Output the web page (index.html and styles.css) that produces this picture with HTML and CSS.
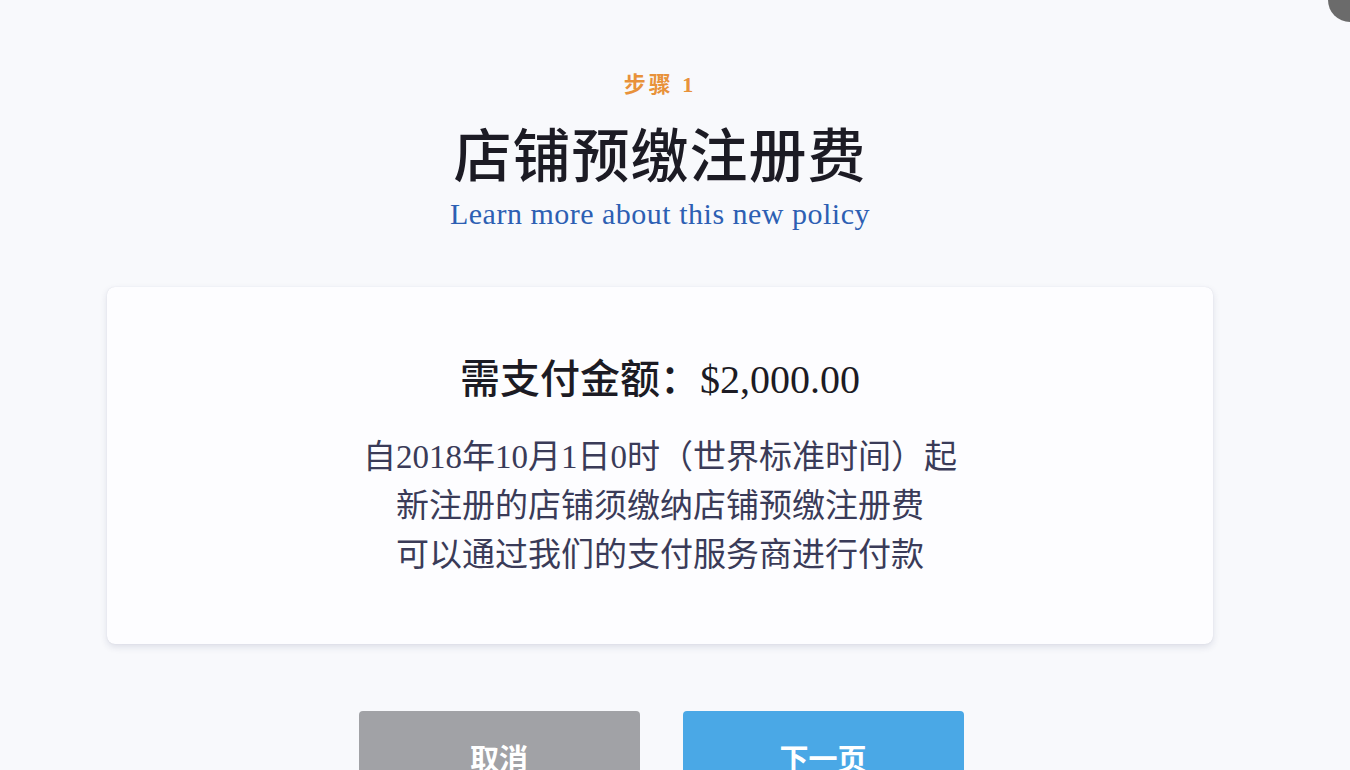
FILE: index.html
```html
<!DOCTYPE html>
<html lang="zh-CN">
  <head>
    <meta charset="UTF-8" />
    <meta name="viewport" content="width=device-width, initial-scale=1.0" />
    <title>店铺预缴注册费</title>
    <link rel="stylesheet" href="styles.css">
  </head>
  <body>
    <div class="corner-dot"></div>

    <div class="page">
      <header class="step-header">
        <div class="step-label">步骤 1</div>
        <h1>店铺预缴注册费</h1>
        <a class="policy-link" href="#">Learn more about this new policy</a>
      </header>

      <div class="fee-card">
        <div class="fee-amount">需支付金额：$2,000.00</div>
        <p class="fee-note">
          <span>自2018年10月1日0时（世界标准时间）起</span>
          <span>新注册的店铺须缴纳店铺预缴注册费</span>
          <span>可以通过我们的支付服务商进行付款</span>
        </p>
      </div>

      <div class="actions">
        <button class="btn btn-cancel">取消</button>
        <button class="btn btn-next">下一页</button>
      </div>
    </div>
  </body>
</html>
```

FILE: styles.css
```css
:root {
  --page-bg: #f8f9fc;
  --card-bg: #fdfdff;
  --text-dark: #1c1b24;
  --text-body: #3a3b58;
  --orange: #e8923a;
  --link-blue: #2d5fb3;
  --gray-btn: #a1a2a6;
  --blue-btn: #4aa8e6;
}

body {
  margin: 0;
  background-color: var(--page-bg);
  font-family: "Liberation Serif", "Noto Sans CJK SC", serif;
  color: var(--text-dark);
  height: 770px;
  overflow: hidden;
}

.corner-dot {
  position: absolute;
  top: -22px;
  right: -22px;
  width: 44px;
  height: 44px;
  border-radius: 50%;
  background-color: #6b6b6b;
}

.page {
  width: 1106px;
  margin-left: 107px;
  display: flex;
  flex-direction: column;
  align-items: center;
}

.step-header {
  display: flex;
  flex-direction: column;
  align-items: center;
  padding-top: 70px;
}

.step-label {
  font-size: 22px;
  font-weight: bold;
  color: var(--orange);
  line-height: 30px;
  letter-spacing: 3px;
}

.step-header h1 {
  margin: 19px 0 0;
  font-size: 58px;
  font-weight: 500;
  line-height: 78px;
  letter-spacing: 1px;
}

.policy-link {
  font-size: 30px;
  letter-spacing: 0.5px;
  color: var(--link-blue);
  text-decoration: none;
  line-height: 36px;
  margin-top: -1px;
}

.fee-card {
  align-self: stretch;
  margin-top: 55px;
  height: 357px;
  box-sizing: border-box;
  padding-top: 66px;
  background-color: var(--card-bg);
  border-radius: 8px;
  box-shadow: 0 3px 7px rgba(40, 50, 90, 0.13), 0 0 1px rgba(40, 50, 90, 0.15);
  text-align: center;
}

.fee-amount {
  font-size: 40px;
  font-weight: 500;
  line-height: 54px;
}

.fee-note {
  margin: 26px 0 0;
  font-size: 33px;
  line-height: 49px;
  color: var(--text-body);
  display: flex;
  flex-direction: column;
  align-items: center;
}

.actions {
  display: flex;
  gap: 43px;
  margin-top: 67px;
  margin-left: 2px;
}

.btn {
  width: 281px;
  height: 72px;
  border: none;
  border-radius: 4px;
  color: white;
  font-family: "Noto Sans CJK SC", sans-serif;
  font-size: 29px;
  font-weight: bold;
  padding-top: 20px;
  cursor: pointer;
}

.btn-cancel {
  background-color: var(--gray-btn);
}

.btn-next {
  background-color: var(--blue-btn);
}
```
